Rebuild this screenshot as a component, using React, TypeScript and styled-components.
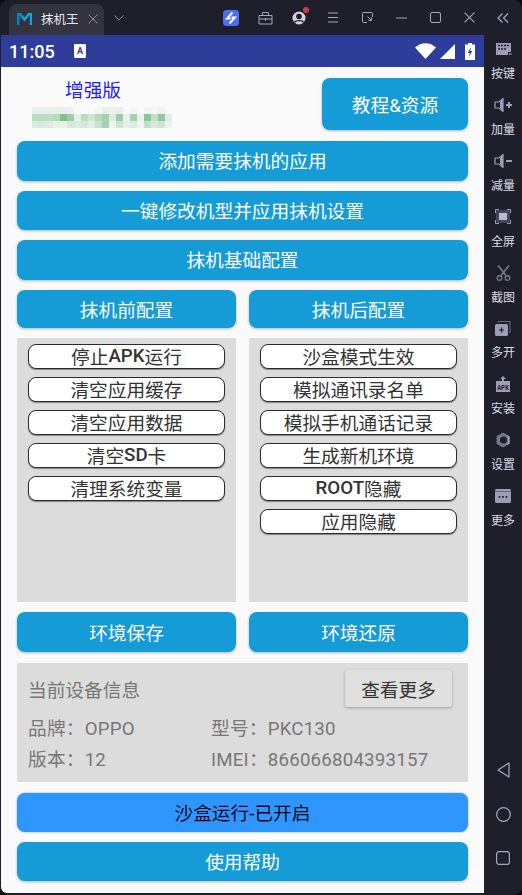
import React from 'react';
import styled, { createGlobalStyle } from 'styled-components';

const GlobalStyle = createGlobalStyle`
  html, body {
    margin: 0;
    padding: 0;
    background: #0b0b0f;
  }
  * {
    box-sizing: border-box;
  }
`;

const FONT = `Roboto, "Noto Sans CJK SC", sans-serif`;

const Windowed = styled.div`
  width: 522px;
  height: 895px;
  display: flex;
  flex-direction: column;
  overflow: hidden;
  background: #1e1f2a;
  border-radius: 8px;
  font-family: ${FONT};
`;

// Title bar
const TitleBar = styled.div`
  height: 35px;
  flex: none;
  display: flex;
  align-items: flex-end;
  padding: 0 2px 0 9px;
`;

const Tab = styled.div`
  width: 95px;
  height: 31px;
  display: flex;
  align-items: center;
  padding: 0 0 2px 8px;
  gap: 9px;
  background: #33343f;
  border-radius: 8px 8px 0 0;
  color: #e8e8ee;
  font-size: 12.5px;
`;

const TabMenu = styled.div`
  margin-left: 10px;
  height: 35px;
  display: flex;
  align-items: center;
`;

const ToolIcons = styled.div`
  margin-left: auto;
  display: flex;
  height: 35px;
`;

const ToolIcon = styled.div`
  position: relative;
  width: 34px;
  height: 35px;
  display: flex;
  align-items: center;
  justify-content: center;
`;

const RedDot = styled.span`
  position: absolute;
  top: 7px;
  right: 7px;
  width: 6px;
  height: 6px;
  border-radius: 50%;
  background: #d0393c;
`;

// Layout
const Body = styled.div`
  flex: 1;
  display: flex;
  min-height: 0;
`;

const Phone = styled.div`
  width: 483px;
  margin: 0 0 2px 1px;
  display: flex;
  flex-direction: column;
  background: #fafafa;
  border-radius: 0 0 0 6px;
  overflow: hidden;
`;

const StatusBar = styled.div`
  height: 32px;
  flex: none;
  display: flex;
  align-items: center;
  padding: 0 9px 0 8px;
  background: #2e3d9a;
  color: #fff;
  font-size: 18px;
  font-weight: 500;
`;

const StatusBadge = styled.svg`
  margin-left: 19px;
`;

const StatusIcons = styled.div`
  margin-left: auto;
  display: flex;
  align-items: center;
  gap: 4px;
`;

const SignalIcon = styled.svg`
  margin-right: 6px;
`;

const Content = styled.div`
  display: flex;
  flex-direction: column;
  gap: 10px;
  padding: 11px 16px 0;
`;

const Header = styled.div`
  display: flex;
  height: 53px;
`;

const Brand = styled.div`
  padding-left: 15px;
  flex: 1;
`;

const BrandTitle = styled.div`
  margin-left: 33px;
  color: #1a1aff;
  font-size: 18.7px;
  line-height: 26px;
`;

const Mosaic = styled.svg`
  display: block;
  margin-top: 3px;
`;

const Button = styled.div<{ $h?: number; $w?: number }>`
  height: ${({ $h }) => $h ?? 39.6}px;
  ${({ $w }) => ($w ? `width: ${$w}px;` : '')}
  flex: none;
  display: flex;
  align-items: center;
  justify-content: center;
  padding-bottom: 2px;
  border-radius: 8px;
  background: #159cd6;
  color: #fff;
  font-size: 18.7px;
  box-shadow: 0 1px 3px rgba(0, 0, 0, 0.28);
`;

const RunButton = styled(Button)`
  margin-top: 1px;
  background: #3096ff;
  color: #08081c;
  box-shadow: 0 0 2px rgba(0, 60, 160, 0.5);
`;

const Split = styled.div`
  display: grid;
  grid-template-columns: 219px 219px;
  column-gap: 13px;
`;

const Panel = styled.div`
  height: 264px;
  padding: 6px 11px 0;
  display: flex;
  flex-direction: column;
  gap: 8px;
  background: #dcdcdc;
`;

const Chip = styled.div`
  height: 25px;
  flex: none;
  display: flex;
  align-items: center;
  justify-content: center;
  padding-bottom: 2px;
  background: #fff;
  border: 1.5px solid #2b2b2b;
  border-radius: 8px;
  box-shadow: 0 1px 1px rgba(0, 0, 0, 0.4);
  color: #333;
  font-size: 18.7px;
`;

const Latin = styled.span`
  font-weight: 500;
`;

const InfoCard = styled.div`
  height: 119px;
  margin-top: 1px;
  padding: 7px 16px 0 11px;
  background: #dcdcdc;
  color: #777;
  font-size: 18.7px;
`;

const InfoHead = styled.div`
  display: flex;
  align-items: center;
  justify-content: space-between;
  height: 37px;
  margin-bottom: 4px;
`;

const MoreButton = styled.div`
  width: 107px;
  height: 37px;
  display: flex;
  align-items: center;
  justify-content: center;
  background: #e0e0e0;
  border-radius: 3px;
  box-shadow: 0 1px 3px rgba(0, 0, 0, 0.3);
  color: #333;
`;

const InfoGrid = styled.div`
  display: grid;
  grid-template-columns: 183px 1fr;
  grid-auto-rows: 31px;
  align-items: center;
  letter-spacing: 0.2px;
`;

// Side toolbar
const SideBar = styled.div`
  width: 38px;
  flex: none;
  display: flex;
  flex-direction: column;
  align-items: center;
  padding-top: 2px;
`;

const SideItem = styled.div`
  width: 38px;
  height: 55.9px;
  flex: none;
  display: flex;
  flex-direction: column;
  align-items: center;
  padding-top: 2px;
`;

const SideIcon = styled.div`
  height: 20px;
  display: flex;
  align-items: center;
  justify-content: center;
`;

const SideLabel = styled.span`
  margin-top: 7px;
  color: #dcdce4;
  font-size: 12px;
  line-height: 16px;
`;

const NavGroup = styled.div`
  margin-top: auto;
  margin-bottom: 30px;
  display: flex;
  flex-direction: column;
  align-items: center;
  gap: 29px;
`;

const STROKE = '#a8a6bc';
const FILL = '#9f9db5';

const Logo = () => (
  <svg width="15" height="12" viewBox="0 0 15 12">
    <path d="M1 12V1h2l4.500 5.500L12 1h2v11" fill="none" stroke="#12a5e0" strokeWidth="2.400" />
    <path d="M1 12V1h2l2 2.500" fill="none" stroke="#0c86c4" strokeWidth="2.400" />
  </svg>
);

const Cross = ({ size = 10, color = '#8e8e98' }: { size?: number; color?: string }) => (
  <svg width={size} height={size} viewBox="0 0 10 10">
    <path d="M.5.5l9 9M9.500.5l-9 9" stroke={color} strokeWidth="1" fill="none" />
  </svg>
);

const mosaicRows = [
  [0.12, 0.14, 0.14, 0.14, 0.12, 0.1, 0, 0, 0, 0.06, 0.14, 0.1, 0.12, 0, 0.05, 0, 0.06, 0.04, 0.08, 0],
  [0.42, 0.42, 0.42, 0.46, 0.8, 0.6, 0.16, 0.42, 0.28, 0.46, 0.56, 0.2, 0.62, 0.1, 0.56, 0.1, 0.74, 0.36, 0.68, 0.18],
  [0.2, 0.22, 0.2, 0.12, 0.12, 0.24, 0.2, 0.24, 0.18, 0.34, 0.56, 0.08, 0.3, 0.16, 0.2, 0.08, 0.36, 0.22, 0.3, 0.1],
];

const BlurredText = () => (
  <Mosaic width="140" height="21" viewBox="0 0 140 21">
    <defs>
      <filter id="soft">
        <feGaussianBlur stdDeviation="0.7" />
      </filter>
    </defs>
    <g filter="url(#soft)">
      {mosaicRows.map((row, y) =>
        row.map((a, x) => (
          <rect key={`${x}-${y}`} x={x * 7} y={y * 7} width="7" height="7" fill="#62b274" opacity={a} />
        ))
      )}
    </g>
  </Mosaic>
);

const toolIcons: React.ReactNode[] = [
  <svg width="16" height="16" viewBox="0 0 16 16" key="bolt">
    <rect width="16" height="16" rx="3.500" fill="#4a6ff5" />
    <path d="M9.500 2.500L4 8.500h3.500M6.500 13.500L12 7.500H8.500" stroke="#fff" strokeWidth="1.900" fill="none" />
  </svg>,
  <svg width="15" height="14" viewBox="0 0 15 14" key="box" fill="none" stroke={STROKE}>
    <path d="M1 4.500h13v8.500H1zM4.500 4.500V1.500h6v3M1 8h13M7.500 7v3" />
  </svg>,
  <svg width="14" height="14" viewBox="0 0 14 14" key="user">
    <circle cx="7" cy="7" r="6.500" fill="#d4d2e2" />
    <circle cx="7" cy="5.500" r="2.800" fill="#1e1f2a" />
    <path d="M2.500 11.500C3.500 9 10.500 9 11.500 11.500" stroke="#1e1f2a" strokeWidth="1.400" fill="none" />
  </svg>,
  <svg width="12" height="11" viewBox="0 0 12 11" key="menu" stroke={STROKE}>
    <path d="M1 1h10M1 5.500h10M1 10h10" />
  </svg>,
  <svg width="11" height="11" viewBox="0 0 11 11" key="cast" fill="none" stroke={STROKE}>
    <path d="M10.500 5V1.500a1 1 0 0 0-1-1h-8a1 1 0 0 0-1 1v8a1 1 0 0 0 1 1H5M5.500 4.500l3.500 3.500M9.500 5.500V8.500H6.500" />
  </svg>,
  <svg width="11" height="2" viewBox="0 0 11 2" key="min" stroke={STROKE}>
    <path d="M0 1h11" />
  </svg>,
  <svg width="11" height="11" viewBox="0 0 11 11" key="max" fill="none" stroke={STROKE}>
    <rect x=".5" y=".5" width="10" height="10" rx="1.500" />
  </svg>,
  <Cross key="close" size={11} color={STROKE} />,
  <svg width="12" height="10" viewBox="0 0 12 10" key="collapse" fill="none" stroke={STROKE} strokeWidth="1.200">
    <path d="M5.500.5L1 5l4.500 4.500M11 .5L6.500 5l4.500 4.500" />
  </svg>,
];

const sideItems: { label: string; icon: React.ReactNode }[] = [
  {
    label: '按键',
    icon: (
      <svg width="17" height="14" viewBox="0 0 17 14">
        <path d="M1 1h15v9h-3v3H1z" fill={FILL} />
        <path d="M3 3.500h2M6 3.500h2M9 3.500h2M12 3.500h2M3 7h2M6 7h2M9 7h2" stroke="#1e1f2a" strokeWidth="1.400" />
        <path d="M14 12h2.500" stroke="#706e84" strokeWidth="2" />
      </svg>
    ),
  },
  {
    label: '加量',
    icon: (
      <svg width="18" height="14" viewBox="0 0 18 14">
        <path d="M1 4h4l4-3.500v13L5 10H1z" fill="none" stroke={FILL} strokeWidth="1.200" />
        <path d="M6 4l3-3v12l-3-3z" fill={FILL} />
        <path d="M12 7h6M15 4v6" stroke={FILL} strokeWidth="2" />
      </svg>
    ),
  },
  {
    label: '减量',
    icon: (
      <svg width="18" height="14" viewBox="0 0 18 14">
        <path d="M1 4h4l4-3.500v13L5 10H1z" fill="none" stroke={FILL} strokeWidth="1.200" />
        <path d="M6 4l3-3v12l-3-3z" fill={FILL} />
        <path d="M12 7h6" stroke={FILL} strokeWidth="2" />
      </svg>
    ),
  },
  {
    label: '全屏',
    icon: (
      <svg width="16" height="15" viewBox="0 0 16 15">
        <rect x="1" y="1" width="14" height="13" rx="2" fill="#44445a" />
        <rect x="4" y="4" width="8" height="7" fill="#bdbbcf" />
        <path d="M.5 4V.5H4M12 .5h3.500V4M15.500 11v3.500H12M4 14.500H.5V11" stroke={FILL} fill="none" />
      </svg>
    ),
  },
  {
    label: '截图',
    icon: (
      <svg width="15" height="16" viewBox="0 0 15 16" fill="none">
        <path d="M2 .5l8 10M13 .5l-8 10" stroke="#77758c" strokeWidth="1.800" />
        <circle cx="3.500" cy="13" r="2.300" stroke="#77758c" strokeWidth="1.400" />
        <circle cx="11.500" cy="13" r="2.300" stroke="#77758c" strokeWidth="1.400" />
      </svg>
    ),
  },
  {
    label: '多开',
    icon: (
      <svg width="16" height="15" viewBox="0 0 16 15">
        <path d="M3 1.500V.5h12v11h-1" fill="none" stroke="#6c6a80" strokeWidth="1" />
        <rect x="0" y="3" width="13" height="12" rx="1.500" fill={FILL} />
        <path d="M4 9h5M6.500 6.500v5" stroke="#1e1f2a" strokeWidth="1.200" />
      </svg>
    ),
  },
  {
    label: '安装',
    icon: (
      <svg width="16" height="16" viewBox="0 0 16 16">
        <path d="M8 0L5 3h2v2H1v11h14V5H9V3h2z" fill={FILL} />
        <text x="8" y="13.500" textAnchor="middle" fontSize="6.500" fontFamily="Liberation Mono, monospace" fontWeight="700" fill="#1e1f2a">
          APK
        </text>
      </svg>
    ),
  },
  {
    label: '设置',
    icon: (
      <svg width="16" height="16" viewBox="0 0 16 16">
        <path d="M8 .5l6.500 3.700v7.600L8 15.500l-6.500-3.700V4.200z" fill="#77758c" />
        <circle cx="8.500" cy="8" r="3.500" fill="#1e1f2a" />
        <path d="M12 3l2.500 1.500v7L12 13c1.500-3 1.500-7 0-10z" fill="#aaa8bc" />
      </svg>
    ),
  },
  {
    label: '更多',
    icon: (
      <svg width="16" height="14" viewBox="0 0 16 14">
        <rect width="16" height="14" rx="1.500" fill={FILL} />
        <path d="M0 2.500h16" stroke="#6c6a80" />
        <circle cx="4.500" cy="8" r="1" fill="#1e1f2a" />
        <circle cx="8" cy="8" r="1" fill="#1e1f2a" />
        <circle cx="11.500" cy="8" r="1" fill="#1e1f2a" />
      </svg>
    ),
  },
];

const leftChips: React.ReactNode[] = [
  <>停止<Latin>APK</Latin>运行</>,
  '清空应用缓存',
  '清空应用数据',
  <>清空<Latin>SD</Latin>卡</>,
  '清理系统变量',
];
const rightChips: React.ReactNode[] = [
  '沙盒模式生效',
  '模拟通讯录名单',
  '模拟手机通话记录',
  '生成新机环境',
  <><Latin>ROOT</Latin>隐藏</>,
  '应用隐藏',
];

const App: React.FC = () => {
  return (
    <Windowed>
      <GlobalStyle />
      <TitleBar>
        <Tab>
          <Logo />
          <span>抹机王</span>
          <Cross />
        </Tab>
        <TabMenu>
          <svg width="10" height="6" viewBox="0 0 10 6" fill="none" stroke="#8e8e98">
            <path d="M.5.5L5 5 9.500.5" />
          </svg>
        </TabMenu>
        <ToolIcons>
          {toolIcons.map((icon, i) => (
            <ToolIcon key={i}>
              {icon}
              {i === 2 && <RedDot />}
            </ToolIcon>
          ))}
        </ToolIcons>
      </TitleBar>

      <Body>
        <Phone>
          <StatusBar>
            <span>11:05</span>
            <StatusBadge width="12" height="14" viewBox="0 0 12 14">
              <rect width="12" height="14" rx="1" fill="#fff" />
              <text x="6" y="9.500" textAnchor="middle" fontSize="9" fontWeight="700" fontFamily="Roboto, sans-serif" fill="#2e3d9a">
                A
              </text>
            </StatusBadge>
            <StatusIcons>
              <svg width="21" height="16" viewBox="0 0 21 16">
                <path d="M0 4.500C6-1.300 15-1.300 21 4.500L10.500 16z" fill="#fff" />
              </svg>
              <SignalIcon width="15" height="15" viewBox="0 0 15 15">
                <path d="M15 0v15H0z" fill="#fff" />
              </SignalIcon>
              <svg width="10" height="17" viewBox="0 0 10 17">
                <path d="M3 0h4v1.500h3V17H0V1.500h3z" fill="#fff" />
                <path d="M6 4L2.800 10h2L4 14l3.200-6h-2z" fill="#2e3d9a" />
              </svg>
            </StatusIcons>
          </StatusBar>

          <Content>
            <Header>
              <Brand>
                <BrandTitle>增强版</BrandTitle>
                <BlurredText />
              </Brand>
              <Button $w={146} $h={52}>教程&资源</Button>
            </Header>
            <Button>添加需要抹机的应用</Button>
            <Button>一键修改机型并应用抹机设置</Button>
            <Button>抹机基础配置</Button>
            <Split>
              <Button $h={38.6}>抹机前配置</Button>
              <Button $h={38.6}>抹机后配置</Button>
            </Split>
            <Split>
              <Panel>
                {leftChips.map((c, i) => (
                  <Chip key={i}>{c}</Chip>
                ))}
              </Panel>
              <Panel>
                {rightChips.map((c, i) => (
                  <Chip key={i}>{c}</Chip>
                ))}
              </Panel>
            </Split>
            <Split>
              <Button>环境保存</Button>
              <Button>环境还原</Button>
            </Split>
            <InfoCard>
              <InfoHead>
                <span>当前设备信息</span>
                <MoreButton>查看更多</MoreButton>
              </InfoHead>
              <InfoGrid>
                <span>品牌：OPPO</span>
                <span>型号：PKC130</span>
                <span>版本：12</span>
                <span>IMEI：866066804393157</span>
              </InfoGrid>
            </InfoCard>
            <RunButton $h={38.6}>沙盒运行-已开启</RunButton>
            <Button $h={39.4}>使用帮助</Button>
          </Content>
        </Phone>

        <SideBar>
          {sideItems.map((item) => (
            <SideItem key={item.label}>
              <SideIcon>{item.icon}</SideIcon>
              <SideLabel>{item.label}</SideLabel>
            </SideItem>
          ))}
          <NavGroup>
            <svg width="13" height="16" viewBox="0 0 13 16" fill="none" stroke={STROKE} strokeWidth="1.200">
              <path d="M12 1v14L1 8z" strokeLinejoin="round" />
            </svg>
            <svg width="15" height="15" viewBox="0 0 15 15" fill="none" stroke={STROKE} strokeWidth="1.200">
              <circle cx="7.500" cy="7.500" r="6.800" />
            </svg>
            <svg width="14" height="14" viewBox="0 0 14 14" fill="none" stroke={STROKE} strokeWidth="1.200">
              <rect x=".6" y=".6" width="12.800" height="12.800" rx="2.500" />
            </svg>
          </NavGroup>
        </SideBar>
      </Body>
    </Windowed>
  );
};

export default App;
